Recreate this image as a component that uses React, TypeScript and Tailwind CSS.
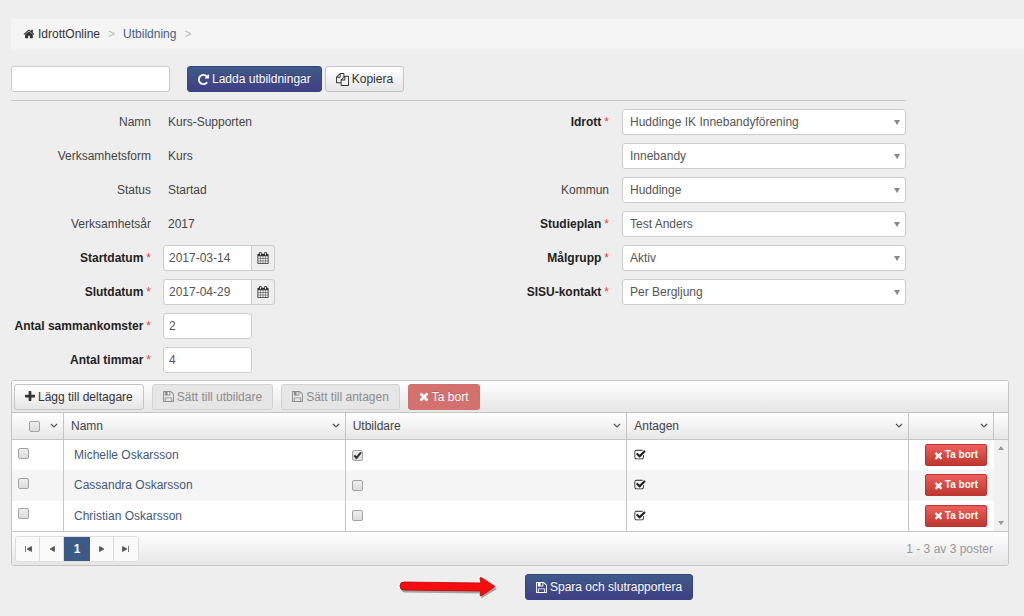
import { useState, type ReactNode } from 'react';

const PATHS = {
  home: 'M1472 992v480q0 26-19 45t-45 19h-384v-384h-256v384h-384q-26 0-45-19t-19-45v-480q0-1 .5-3t.5-3l575-474 575 474q1 2 1 6zm223-69l-62 74q-8 9-21 11h-3q-13 0-21-7l-692-577-692 577q-12 8-24 7-13-2-21-11l-62-74q-8-10-7-23.5t11-21.5l719-599q32-26 76-26t76 26l244 204v-195q0-14 9-23t23-9h192q14 0 23 9t9 23v408l219 182q10 8 11 21.5t-7 23.5z',
  save: 'M512 1536h768v-384h-768v384zm896 0h128v-896q0-14-10-38.5t-20-34.5l-281-281q-10-10-34-20t-39-10v416q0 40-28 68t-68 28h-576q-40 0-68-28t-28-68v-416h-128v1280h128v-416q0-40 28-68t68-28h832q40 0 68 28t28 68v416zm-384-928v-320q0-13-9.5-22.5t-22.5-9.5h-192q-13 0-22.5 9.5t-9.5 22.5v320q0 13 9.5 22.5t22.5 9.5h192q13 0 22.5-9.5t9.5-22.5zm640 32v928q0 40-28 68t-68 28h-1344q-40 0-68-28t-28-68v-1344q0-40 28-68t68-28h928q40 0 88 20t76 48l280 280q28 28 48 76t20 88z',
  checkSquare:
    'M1472 930v318q0 119-84.5 203.5t-203.5 84.5h-832q-119 0-203.5-84.5t-84.5-203.5v-832q0-119 84.5-203.5t203.5-84.5h832q63 0 117 25 15 7 18 23 3 17-9 29l-49 49q-10 10-23 10-3 0-9-2-23-6-45-6h-832q-66 0-113 47t-47 113v832q0 66 47 113t113 47h832q66 0 113-47t47-113v-254q0-13 9-22l64-64q10-10 23-10 6 0 12 3 20 8 20 29zm231-489l-814 814q-24 24-57 24t-57-24l-430-430q-24-24-24-57t24-57l110-110q24-24 57-24t57 24l263 263 647-647q24-24 57-24t57 24l110 110q24 24 24 57t-24 57z',
  plus: 'M1600 736v192q0 40-28 68t-68 28h-416v416q0 40-28 68t-68 28h-192q-40 0-68-28t-28-68v-416h-416q-40 0-68-28t-28-68v-192q0-40 28-68t68-28h416v-416q0-40 28-68t68-28h192q40 0 68 28t28 68v416h416q40 0 68 28t28 68z',
  times:
    'M1490 1322q0 40-28 68l-136 136q-28 28-68 28t-68-28l-294-294-294 294q-28 28-68 28t-68-28l-136-136q-28-28-28-68t28-68l294-294-294-294q-28-28-28-68t28-68l136-136q28-28 68-28t68 28l294 294 294-294q28-28 68-28t68 28l136 136q28 28 28 68t-28 68l-294 294 294 294q28 28 28 68z',
  repeat:
    'M1664 256v448q0 26-19 45t-45 19h-448q-42 0-59-40-17-39 14-69l138-138q-148-137-349-137-104 0-198.5 40.5t-163.5 109.5-109.5 163.5-40.5 198.5 40.5 198.5 109.5 163.5 163.5 109.5 198.5 40.5q119 0 225-52t179-147q7-10 23-12 15 0 25 9l137 138q9 8 9.5 20.5t-7.5 22.5q-109 132-264 204.5t-327 72.5q-156 0-298-61t-245-164-164-245-61-298 61-298 164-245 245-164 298-61q147 0 284.5 55.5t244.5 156.5l130-129q29-31 70-14 39 17 39 59z',
  calendar:
    'M192 1664h288v-288h-288v288zm352 0h320v-288h-320v288zm-352-352h288v-320h-288v320zm352 0h320v-320h-320v320zm-352-384h288v-288h-288v288zm736 736h320v-288h-320v288zm-384-736h320v-288h-320v288zm768 736h288v-288h-288v288zm-384-352h320v-320h-320v320zm-352-864v-288q0-13-9.5-22.5t-22.5-9.5h-64q-13 0-22.5 9.5t-9.5 22.5v288q0 13 9.5 22.5t22.5 9.5h64q13 0 22.5-9.5t9.5-22.5zm736 864h288v-320h-288v320zm-384-384h320v-288h-320v288zm384 0h288v-288h-288v288zm32-480v-288q0-13-9.5-22.5t-22.5-9.5h-64q-13 0-22.5 9.5t-9.5 22.5v288q0 13 9.5 22.5t22.5 9.5h64q13 0 22.5-9.5t9.5-22.5zm384-64v1280q0 52-38 90t-90 38h-1408q-52 0-90-38t-38-90v-1280q0-52 38-90t90-38h128v-96q0-66 47-113t113-47h64q66 0 113 47t47 113v96h384v-96q0-66 47-113t113-47h64q66 0 113 47t47 113v96h128q52 0 90 38t38 90z',
  copy: 'M1696 384q40 0 68 28t28 68v1216q0 40-28 68t-68 28h-960q-40 0-68-28t-28-68v-288h-544q-40 0-68-28t-28-68v-672q0-40 20-88t48-76l408-408q28-28 76-48t88-20h416q40 0 68 28t28 68v328q68-40 128-40h416zm-544 213l-299 299h299v-299zm-640-384l-299 299h299v-299zm196 647l316-316v-416h-384v416q0 40-28 68t-68 28h-416v640h512v-256q0-40 20-88t48-76zm956 804v-1152h-384v416q0 40-28 68t-68 28h-416v640h896z',
};

function Icon({
  name,
  className = 'size-3',
  viewBox = '0 0 1792 1792',
}: {
  name: keyof typeof PATHS;
  className?: string;
  viewBox?: string;
}) {
  return (
    <svg viewBox={viewBox} fill="currentColor" aria-hidden="true" className={`shrink-0 ${className}`}>
      <path d={PATHS[name]} />
    </svg>
  );
}

const BUTTON_STYLES = {
  primary:
    'border-[#37447d] bg-linear-to-b from-[#3d5a89] to-[#403f86] text-white [text-shadow:0_-1px_0_rgba(0,0,0,0.25)]',
  plain: 'border-[#c4c4c4] bg-linear-to-b from-white to-[#e6e6e6] text-[#333]',
  disabled: 'border-[#d2d2d2] bg-[#e6e6e6] text-[#8c8c8c]',
  danger: 'border-[#d16f6c] bg-[#d3716e] text-white [text-shadow:0_-1px_0_rgba(0,0,0,0.15)]',
};

const ICON_BOX = {
  wide: { viewBox: '0 0 1792 1792', className: 'h-[13px] w-[13px]' },
  medium: { viewBox: '128 0 1536 1792', className: 'h-[13px] w-[11px]' },
  narrow: { viewBox: '192 0 1408 1792', className: 'h-[13px] w-[10px]' },
};

function Button({
  kind,
  icon,
  box = 'medium',
  children,
  disabled,
}: {
  kind: keyof typeof BUTTON_STYLES;
  icon: keyof typeof PATHS;
  box?: keyof typeof ICON_BOX;
  children: ReactNode;
  disabled?: boolean;
}) {
  return (
    <button
      type="button"
      disabled={disabled}
      className={`flex h-[26px] items-center gap-[3px] rounded-[3px] border px-2.5 whitespace-nowrap ${BUTTON_STYLES[kind]}`}
    >
      <Icon name={icon} {...ICON_BOX[box]} />
      {children}
    </button>
  );
}

const FIELD = 'h-[26px] border border-[#ccc] bg-white text-[#555]';

function Label({ id, text, required }: { id?: string; text: string; required?: boolean }) {
  if (!required)
    return id ? (
      <label htmlFor={id} className="text-right">
        {text}
      </label>
    ) : (
      <span className="text-right">{text}</span>
    );
  return (
    <label htmlFor={id} className="text-right font-bold whitespace-nowrap text-[#222]">
      {text}
      <span className="ml-[3px] font-normal text-[#e0453d]">*</span>
    </label>
  );
}

function Static({ label, value }: { label: string; value: string }) {
  return (
    <>
      <Label text={label} />
      <span className="pl-[5px]">{value}</span>
    </>
  );
}

function DateField({ id, label, value }: { id: string; label: string; value: string }) {
  return (
    <>
      <Label id={id} text={label} required />
      <div className="flex">
        <input id={id} type="text" defaultValue={value} className={`w-[89px] rounded-l-[3px] px-[5px] ${FIELD}`} />
        <button
          type="button"
          aria-label={`Välj ${label.toLowerCase()}`}
          className="flex h-[26px] w-[23px] items-center justify-center rounded-r-[3px] border border-l-0 border-[#ccc] bg-[#eee] text-[#333]"
        >
          <Icon name="calendar" />
        </button>
      </div>
    </>
  );
}

function NumberField({ id, label, value }: { id: string; label: string; value: string }) {
  return (
    <>
      <Label id={id} text={label} required />
      <input id={id} type="text" defaultValue={value} className={`w-[89px] rounded-[3px] px-[5px] ${FIELD}`} />
    </>
  );
}

function SelectField({ id, label, value, required }: { id: string; label?: string; value: string; required?: boolean }) {
  return (
    <>
      {label ? <Label id={id} text={label} required={required} /> : <span />}
      <div className="relative">
        <select
          id={id}
          aria-label={label ? undefined : 'Gren'}
          className={`w-full appearance-none rounded-[3px] pr-6 pl-[7px] ${FIELD}`}
        >
          <option>{value}</option>
        </select>
        <svg viewBox="0 0 6 5" aria-hidden="true" className="pointer-events-none absolute top-[11px] right-1.5 h-[5px] w-1.5 fill-[#888]">
          <path d="M0 0h6L3 5z" />
        </svg>
      </div>
    </>
  );
}

function Checkbox({ label, defaultChecked }: { label: string; defaultChecked?: boolean }) {
  return (
    <span className="relative inline-flex">
      <input
        type="checkbox"
        aria-label={label}
        defaultChecked={defaultChecked}
        className="peer size-[11px] appearance-none rounded-[2px] border border-[#a3a3a3] bg-linear-to-b from-[#eee] to-[#dcdcdc]"
      />
      <svg
        viewBox="0 0 11 11"
        aria-hidden="true"
        className="pointer-events-none absolute top-0 left-0 hidden size-[11px] peer-checked:block"
      >
        <path d="M2.3 5.4 4.4 8 9 2.4" fill="none" stroke="#333" strokeWidth="2" />
      </svg>
    </span>
  );
}

function HeaderCell({ label, title }: { label: ReactNode; title: string }) {
  return (
    <th scope="col" className="border-r border-[#c5c5c5] p-0 font-normal">
      <div className="flex items-center justify-between pr-[5px] pl-[7px]">
        {label}
        <button type="button" aria-label={`Kolumnmeny ${title}`} className="flex">
          <svg viewBox="0 0 8 6" aria-hidden="true" className="h-1.5 w-2">
            <path d="M1 1l3 3 3-3" fill="none" stroke="#555" strokeWidth="1.2" />
          </svg>
        </button>
      </div>
    </th>
  );
}

const PEOPLE = [
  { name: 'Michelle Oskarsson', trainer: true },
  { name: 'Cassandra Oskarsson', trainer: false },
  { name: 'Christian Oskarsson', trainer: false },
];

const PAGER = [
  { label: 'Första sidan', d: 'M1.5 1v6M7.5 1.5v5L3 4z' },
  { label: 'Föregående sida', d: 'M6.5 1.5v5L2 4z' },
  { label: 'Nästa sida', d: 'M1.5 1.5v5L6 4z' },
  { label: 'Sista sidan', d: 'M6.5 1v6M.5 1.5v5L5 4z' },
];

function PagerButton({ label, d }: { label: string; d: string }) {
  return (
    <button
      type="button"
      aria-label={label}
      className="flex w-6 items-center justify-center border-r border-[#ddd] bg-[#fafafa] last:border-r-0"
    >
      <svg viewBox="0 0 8 8" aria-hidden="true" className="size-2 fill-[#555] stroke-[#555]">
        <path d={d} strokeWidth="0.8" />
      </svg>
    </button>
  );
}

function Participants() {
  return (
    <section className="mt-[7px] mr-[15px] overflow-hidden rounded-[3px] border border-[#c5c5c5] bg-white">
      <div className="flex h-8 items-center gap-2 border-b border-[#c5c5c5] bg-linear-to-b from-white to-[#e6e6e6] px-0.5">
        <Button kind="plain" icon="plus" box="narrow">Lägg till deltagare</Button>
        <Button kind="disabled" icon="save" disabled>Sätt till utbildare</Button>
        <Button kind="disabled" icon="save" disabled>Sätt till antagen</Button>
        <Button kind="danger" icon="times" box="narrow" disabled>Ta bort</Button>
      </div>
      <table className="w-full table-fixed border-separate border-spacing-0 text-left">
        <colgroup>
          <col className="w-[52px]" />
          <col />
          <col />
          <col />
          <col className="w-[85px]" />
          <col className="w-[14px]" />
        </colgroup>
        <thead>
          <tr className="h-[27px] bg-linear-to-b from-white to-[#e6e6e6] [&>th]:border-b">
            <HeaderCell
              title="markering"
              label={
                <span className="flex pl-2.5">
                  <Checkbox label="Markera alla" />
                </span>
              }
            />
            <HeaderCell title="Namn" label="Namn" />
            <HeaderCell title="Utbildare" label="Utbildare" />
            <HeaderCell title="Antagen" label="Antagen" />
            <HeaderCell title="åtgärder" label={<span />} />
            <td className="border-b border-[#c5c5c5] p-0" />
          </tr>
        </thead>
        <tbody>
          {PEOPLE.map((p, i) => (
            <tr key={p.name} className="even:bg-[#f5f5f5]">
              <td className="border-r border-[#c5c5c5] p-0 pb-1 pl-1.5 align-middle">
                <span className="flex">
                  <Checkbox label={`Markera ${p.name}`} />
                </span>
              </td>
              <td className="border-r border-[#c5c5c5] p-0 pl-2.5">
                <a href="#person" className="text-[#45587a]">
                  {p.name}
                </a>
              </td>
              <td className="border-r border-[#c5c5c5] p-0 pl-1.5">
                <span className="flex">
                  <Checkbox label={`${p.name} utbildare`} defaultChecked={p.trainer} />
                </span>
              </td>
              <td className="border-r border-[#c5c5c5] p-0 pl-[7px]">
                <Icon name="checkSquare" className="size-3 text-[#222]" />
              </td>
              <td className="h-[30px] p-0 pr-[7px]">
                <button
                  type="button"
                  className="ml-auto flex h-[22px] items-center gap-0.5 rounded-[2px] border border-[#bd3330] bg-linear-to-b from-[#ee5f5b] to-[#bd362f] px-2 text-[10px] font-bold whitespace-nowrap text-white"
                >
                  <Icon name="times" viewBox="192 0 1408 1792" className="h-[11px] w-[9px]" />
                  Ta bort
                </button>
              </td>
              {i === 0 && (
                <td rowSpan={3} className="bg-[#f1f1f1] p-0">
                  <div className="flex h-[91px] flex-col items-center justify-between py-1.5">
                    <svg viewBox="0 0 6 4" aria-hidden="true" className="h-1 w-1.5 fill-[#999]">
                      <path d="M0 4h6L3 0z" />
                    </svg>
                    <svg viewBox="0 0 6 4" aria-hidden="true" className="h-1 w-1.5 fill-[#999]">
                      <path d="M0 0h6L3 4z" />
                    </svg>
                  </div>
                </td>
              )}
            </tr>
          ))}
        </tbody>
      </table>
      <div className="flex h-[34px] items-center justify-between border-t border-[#c5c5c5] bg-linear-to-b from-white to-[#e6e6e6] pr-[15px] pl-[3px]">
        <nav aria-label="Sidor" className="flex h-[26px] overflow-hidden rounded-[3px] border border-[#ddd]">
          <PagerButton {...PAGER[0]} />
          <PagerButton {...PAGER[1]} />
          <button type="button" aria-current="page" className="w-[26px] bg-[#3d5a87] font-bold text-white">
            1
          </button>
          <PagerButton {...PAGER[2]} />
          <PagerButton {...PAGER[3]} />
        </nav>
        <span className="text-[#999]">1 - 3 av 3 poster</span>
      </div>
    </section>
  );
}

export default function App() {
  const [query, setQuery] = useState('');
  return (
    <div className="min-h-screen bg-[#eee] pt-[19px] pl-[11px] font-['Liberation_Sans',Arial,sans-serif] text-[12px] leading-4 text-[#444]">
      <nav aria-label="Brödsmulor" className="flex h-[30px] items-center gap-2 bg-[#f5f5f5] px-3">
        <a href="#hem" className="flex items-center gap-[3px] text-[#333]">
          <Icon name="home" />
          IdrottOnline
        </a>
        <span className="text-[#bbb]">&gt;</span>
        <a href="#utbildning" className="text-[#45607f]">
          Utbildning
        </a>
        <span className="text-[#bbb]">&gt;</span>
      </nav>

      <div className="flex max-w-[895px] gap-[3px] border-b border-[#c8c8c8] pt-[17px] pb-2">
        <input
          type="text"
          aria-label="Sök utbildning"
          value={query}
          onChange={(e) => setQuery(e.target.value)}
          className={`mr-3.5 w-[159px] rounded-[3px] px-1.5 ${FIELD}`}
        />
        <Button kind="primary" icon="repeat">Ladda utbildningar</Button>
        <Button kind="plain" icon="copy" box="wide">Kopiera</Button>
      </div>

      <form className="grid max-w-[895px] grid-cols-[448px_1fr] items-start pt-2">
        <div className="grid auto-rows-[26px] grid-cols-[140px_1fr] items-center gap-x-3 gap-y-2">
          <Static label="Namn" value="Kurs-Supporten" />
          <Static label="Verksamhetsform" value="Kurs" />
          <Static label="Status" value="Startad" />
          <Static label="Verksamhetsår" value="2017" />
          <DateField id="start" label="Startdatum" value="2017-03-14" />
          <DateField id="slut" label="Slutdatum" value="2017-04-29" />
          <NumberField id="sammankomster" label="Antal sammankomster" value="2" />
          <NumberField id="timmar" label="Antal timmar" value="4" />
        </div>
        <div className="grid auto-rows-[26px] grid-cols-[150px_1fr] items-center gap-x-[13px] gap-y-2">
          <SelectField id="idrott" label="Idrott" value="Huddinge IK Innebandyförening" required />
          <SelectField id="gren" value="Innebandy" />
          <SelectField id="kommun" label="Kommun" value="Huddinge" />
          <SelectField id="studieplan" label="Studieplan" value="Test Anders" required />
          <SelectField id="malgrupp" label="Målgrupp" value="Aktiv" required />
          <SelectField id="sisu" label="SISU-kontakt" value="Per Bergljung" required />
        </div>
      </form>

      <Participants />

      <div className="flex items-center gap-7 pt-2 pl-[388px]">
        <svg viewBox="0 0 98 26" aria-hidden="true" className="h-[26px] w-[98px] overflow-visible">
          <path
            d="M5 8.5 82 9.5 81 4.5 97 13 81 22.5 82 17.5 5 16.5Q1 16 1 12.5T5 8.5z"
            fill="#555"
            opacity="0.5"
            transform="translate(1 2)"
          />
          <path
            d="M5 8 82 9 81 4.5Q81 3 83 4L96 12.5 83 21.5Q81 22.5 81 21L82 17 5 16Q1 16 1 12T5 8z"
            fill="#f60d0d"
            stroke="#c20000"
            strokeWidth="0.8"
          />
        </svg>
        <Button kind="primary" icon="save">Spara och slutrapportera</Button>
      </div>
    </div>
  );
}
